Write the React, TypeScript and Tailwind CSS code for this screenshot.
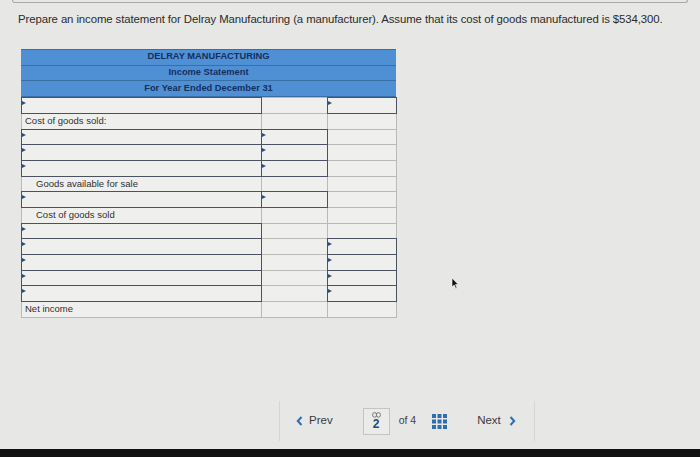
import React from "react";

type Cell = "label" | "blank" | "input";

type Row = {
  label?: string;
  indent?: boolean;
  cells: [Cell, Cell, Cell];
};

const rows: Row[] = [
  { cells: ["input", "blank", "input"] },
  { label: "Cost of goods sold:", cells: ["label", "blank", "blank"] },
  { cells: ["input", "input", "blank"] },
  { cells: ["input", "input", "blank"] },
  { cells: ["input", "input", "blank"] },
  { label: "Goods available for sale", indent: true, cells: ["label", "blank", "blank"] },
  { cells: ["input", "input", "blank"] },
  { label: "Cost of goods sold", indent: true, cells: ["label", "blank", "blank"] },
  { cells: ["input", "blank", "blank"] },
  { cells: ["input", "blank", "input"] },
  { cells: ["input", "blank", "input"] },
  { cells: ["input", "blank", "input"] },
  { cells: ["input", "blank", "input"] },
  { label: "Net income", cells: ["label", "blank", "blank"] },
];

const Marker = () => (
  <span className="absolute left-0 top-[3px] h-0 w-0 border-y-[2.5px] border-l-[4px] border-y-transparent border-l-[#2d4f7c]" />
);

// cells overlap by 1px so borders collapse like a table
const TableCell = ({ type, row }: { type: Cell; row: Row }) => {
  if (type === "input") {
    return (
      <div className="relative z-10 -mb-px -mr-px h-[16.7px] border-[1.5px] border-[#4a5160] bg-[#efefed]">
        <Marker />
      </div>
    );
  }
  if (type === "label") {
    return (
      <div
        className={`-mb-px -mr-px flex h-[16.7px] items-center border border-[#b9b9b7] bg-[#efefed] text-[9.5px] text-[#2f2f2f] ${
          row.indent ? "pl-[14px]" : "pl-[3px]"
        }`}>
        {row.label}
      </div>
    );
  }
  return <div className="-mb-px -mr-px h-[16.7px] border border-[#b9b9b7] bg-[#efefed]" />;
};

const HeaderRow = ({ children }: { children: React.ReactNode }) => (
  <div className="flex h-[15.7px] items-center justify-center border-b border-[#3b6ea5] bg-[#4f8fd4] text-[9.3px] font-bold text-[#14305e]">
    {children}
  </div>
);

const GridIcon = () => (
  <svg width="15" height="15" viewBox="0 0 15 15">
    {[0, 5.5, 11].map((y) =>
      [0, 5.5, 11].map((x) => (
        <rect key={`${x}-${y}`} x={x} y={y} width="4" height="4" fill="#2e6db4" />
      ))
    )}
  </svg>
);

export default function App() {
  return (
    <div
      className="relative flex h-[457px] w-[700px] flex-col overflow-hidden bg-[#e7e7e5]"
      style={{ fontFamily: '"Liberation Sans", Arial, sans-serif' }}>
      <div className="mx-[12px] h-[3px] rounded-b-md border-x border-b border-[#a9a9a7]" />
      <p className="mt-[8px] pl-[18px] text-[11.4px] tracking-[-0.1px] text-[#2b2b2b]">
        Prepare an income statement for Delray Manufacturing (a manufacturer). Assume that its cost of goods
        manufactured is $534,300.
      </p>

      <div className="ml-[21px] mt-[21px] w-[375px] border-t border-[#3b6ea5]">
        <HeaderRow>DELRAY MANUFACTURING</HeaderRow>
        <HeaderRow>Income Statement</HeaderRow>
        <HeaderRow>For Year Ended December 31</HeaderRow>
        <div className="pr-px">
          {rows.map((row, i) => (
            <div key={i} className="grid grid-cols-[240px_66px_69px]">
              {row.cells.map((c, j) => (
                <TableCell key={j} type={c} row={row} />
              ))}
            </div>
          ))}
        </div>
      </div>

      <div className="mt-auto flex h-[40px] items-center">
        <div className="ml-[279px] flex h-full w-[256px] items-center border-x border-[#d6d6d4]">
          <button className="flex items-center gap-[6px] pl-[16px] text-[11.5px] text-[#3a3a3a]">
            <svg width="7" height="10" viewBox="0 0 7 10">
              <path d="M5.5 1 L1.8 5 L5.5 9" stroke="#2e6db4" strokeWidth="2" fill="none" />
            </svg>
            Prev
          </button>
          <div className="ml-[30px] flex h-[27px] w-[27px] flex-col items-center justify-center border border-[#c4c4c2] bg-[#ebebe9]">
            <svg width="9" height="6" viewBox="0 0 9 6">
              <rect x="0.6" y="0.6" width="4" height="4.6" rx="2" stroke="#777" strokeWidth="1" fill="none" />
              <rect x="4.4" y="0.6" width="4" height="4.6" rx="2" stroke="#777" strokeWidth="1" fill="none" />
            </svg>
            <span className="text-[12px] leading-[13px] font-bold text-[#24487a]">2</span>
          </div>
          <span className="ml-[9px] text-[10.5px] text-[#444]">of 4</span>
          <span className="ml-[16px]">
            <GridIcon />
          </span>
          <button className="ml-[30px] flex items-center gap-[8px] text-[11.5px] text-[#3a3a3a]">
            Next
            <svg width="7" height="10" viewBox="0 0 7 10">
              <path d="M1.5 1 L5.2 5 L1.5 9" stroke="#2e6db4" strokeWidth="2" fill="none" />
            </svg>
          </button>
        </div>
      </div>
      <div className="mt-[8px] h-[8px] bg-[#111]" />

      <svg className="absolute left-[451px] top-[277px]" width="8" height="12" viewBox="0 0 8 12">
        <path d="M1 1 L1 10 L3.2 8 L4.8 11.5 L6 11 L4.5 7.6 L7.2 7.6 Z" fill="#111" stroke="#fff" strokeWidth="0.6" />
      </svg>
    </div>
  );
}
